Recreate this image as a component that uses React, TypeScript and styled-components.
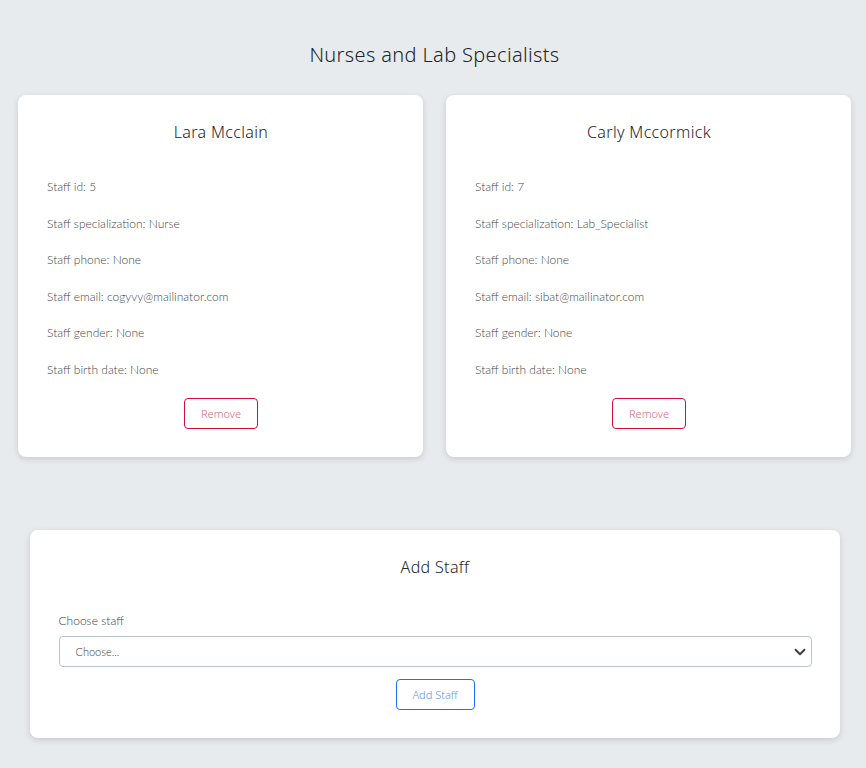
import React from "react";
import styled, { createGlobalStyle } from "styled-components";

const Global = createGlobalStyle`
  html, body { margin: 0; padding: 0; background: #e8ebee; }
  body { font-family: "Lato", "Open Sans", sans-serif; color: #212529; }
  * { box-sizing: border-box; }
`;

const Page = styled.div`
  min-height: 768px;
  padding: 40px 15px 30px 18px;
  display: flex;
  flex-direction: column;
  align-items: center;
`;

const Title = styled.h1`
  margin: 0 0 25px;
  font-family: "Noto Sans", sans-serif;
  font-weight: 300;
  font-size: 20px;
  line-height: 30px;
  letter-spacing: 0.35px;
  color: #212529;
  text-align: center;
`;

const CardGrid = styled.div`
  width: 833px;
  display: grid;
  grid-template-columns: 1fr 1fr;
  gap: 23px;
`;

const Card = styled.div<{ $wide?: boolean }>`
  background: #fff;
  border-radius: 8px;
  box-shadow: 0 2px 6px rgba(0, 0, 0, 0.14);
  padding: 25px 28px 28px 29px;
  display: flex;
  flex-direction: column;
  width: ${(p) => (p.$wide ? "810px" : "auto")};
  margin-top: ${(p) => (p.$wide ? "73px" : "0")};
`;

const CardTitle = styled.h2`
  margin: 0;
  font-family: "Noto Sans", sans-serif;
  font-weight: 300;
  font-size: 16px;
  line-height: 24px;
  letter-spacing: 0.35px;
  text-align: center;
  color: #212529;
`;

const InfoList = styled.div`
  margin-top: 33px;
  display: flex;
  flex-direction: column;
  gap: 16.6px;
`;

const Info = styled.p`
  margin: 0;
  font-family: "Lato", sans-serif;
  font-weight: 300;
  font-size: 12px;
  line-height: 20px;
  color: #44474d;
`;

const Btn = styled.button<{ $tone: "danger" | "primary" }>`
  align-self: center;
  height: 31px;
  padding: 0 14px;
  background: #fff;
  border: 1px solid ${(p) => (p.$tone === "danger" ? "#d0103a" : "#1a73e8")};
  border-radius: 4px;
  color: ${(p) => (p.$tone === "danger" ? "#d8687f" : "#5a95e8")};
  font-family: "Noto Sans", sans-serif;
  font-weight: 300;
  font-size: 11px;
  cursor: pointer;
`;

const RemoveBtn = styled(Btn)`
  margin-top: 18px;
  width: 74px;
`;

const AddBtn = styled(Btn)`
  margin-top: 12px;
  width: 79px;
`;

const Label = styled.label`
  margin-top: 32px;
  font-family: "Lato", sans-serif;
  font-weight: 300;
  font-size: 12px;
  line-height: 20px;
  color: #3a3d42;
`;

const SelectWrap = styled.div`
  position: relative;
  margin-top: 5px;
`;

const Select = styled.select`
  width: 100%;
  height: 31px;
  appearance: none;
  border: 1px solid #b9c4d0;
  border-radius: 4px;
  background: #fff;
  padding: 0 16px;
  font-family: "Lato", sans-serif;
  font-weight: 300;
  font-size: 11px;
  color: #3a3d42;
`;

const Chevron = styled.svg`
  position: absolute;
  right: 6px;
  top: 10px;
  pointer-events: none;
`;

const staff = [
  { name: "Lara Mcclain", id: 5, spec: "Nurse", email: "cogyvy@mailinator.com" },
  { name: "Carly Mccormick", id: 7, spec: "Lab_Specialist", email: "sibat@mailinator.com" },
];

export default function App() {
  return (
    <>
      <Global />
      <Page>
        <Title>Nurses and Lab Specialists</Title>
        <CardGrid>
          {staff.map((s) => (
            <Card key={s.id}>
              <CardTitle>{s.name}</CardTitle>
              <InfoList>
                <Info>Staff id: {s.id}</Info>
                <Info>Staff specialization: {s.spec}</Info>
                <Info>Staff phone: None</Info>
                <Info>Staff email: {s.email}</Info>
                <Info>Staff gender: None</Info>
                <Info>Staff birth date: None</Info>
              </InfoList>
              <RemoveBtn $tone="danger">Remove</RemoveBtn>
            </Card>
          ))}
        </CardGrid>
        <Card $wide>
          <CardTitle>Add Staff</CardTitle>
          <Label>Choose staff</Label>
          <SelectWrap>
            <Select defaultValue="">
              <option value="">Choose...</option>
            </Select>
            <Chevron width="12" height="12" viewBox="0 0 16 16">
              <path d="M2 5l6 6 6-6" fill="none" stroke="#343a40" strokeWidth="2.4" strokeLinecap="round" strokeLinejoin="round" />
            </Chevron>
          </SelectWrap>
          <AddBtn $tone="primary">Add Staff</AddBtn>
        </Card>
      </Page>
    </>
  );
}
